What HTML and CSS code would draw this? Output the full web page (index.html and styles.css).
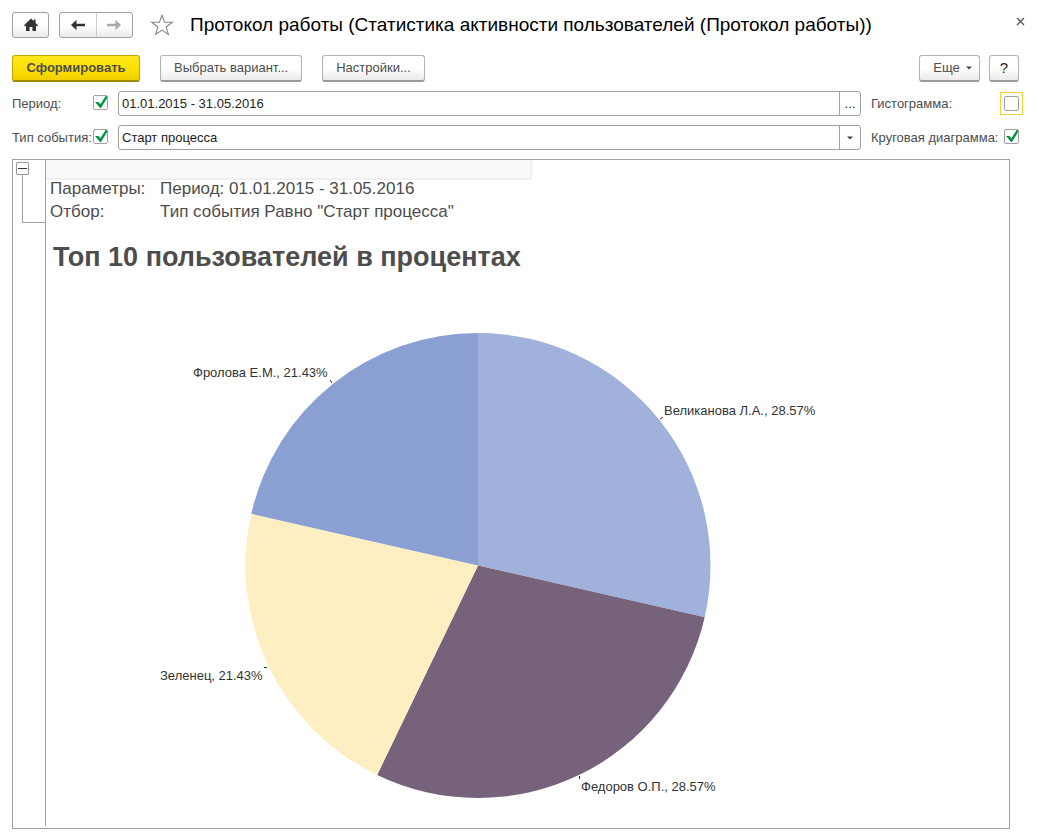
FILE: index.html
```html
<!DOCTYPE html>
<html lang="ru">
<head>
<meta charset="utf-8">
<title>Протокол работы</title>
<link rel="stylesheet" href="styles.css">
</head>
<body>
<header class="titlebar">
  <button class="btn icon-btn" type="button" aria-label="Начальная страница">
    <svg width="16" height="14" viewBox="0 0 16 14"><path d="M8 0.5L1 7.2l.9 1.3L3 7.6V13h3.6V9h2.8v4H13V7.6l1.1.9L15 7.2 12.6 4.9V1.5h-2v1.6z" fill="#333"/></svg>
  </button>
  <div class="nav-group">
    <button class="nav-btn" type="button" aria-label="Назад">
      <svg width="16" height="12" viewBox="0 0 16 12"><path d="M1 6L6.500 .7V4.800H15V7.200H6.500V11.300z" fill="#333"/></svg>
    </button>
    <button class="nav-btn" type="button" aria-label="Вперед" disabled>
      <svg width="16" height="12" viewBox="0 0 16 12"><path d="M15 6L9.500 .7V4.800H1V7.200H9.500V11.300z" fill="#aaa"/></svg>
    </button>
  </div>
  <button class="plain-btn star" type="button" aria-label="В избранное">
    <svg width="24" height="22" viewBox="0 0 24 22"><path d="M12 1.200L14.500 8.200H22.300L16.100 13L18.400 20.400L12 16.100L5.600 20.400L7.900 13L1.700 8.200H9.500Z" fill="#fff" stroke="#848484" stroke-width="1.1"/></svg>
  </button>
  <h1 class="title">Протокол работы (Статистика активности пользователей (Протокол работы))</h1>
  <button class="plain-btn close" type="button" aria-label="Закрыть">
    <svg width="9" height="9" viewBox="0 0 9 9"><path d="M1 1l7 7M8 1L1 8" stroke="#555" stroke-width="1.3"/></svg>
  </button>
</header>

<div class="toolbar">
  <button class="btn primary" type="button">Сформировать</button>
  <button class="btn" type="button">Выбрать вариант...</button>
  <button class="btn" type="button">Настройки...</button>
  <div class="toolbar-end">
    <button class="btn more" type="button">Еще
      <svg width="6" height="4" viewBox="0 0 6 4"><path d="M0 .5h6L3 3.500z" fill="#444"/></svg>
    </button>
    <button class="btn help" type="button">?</button>
  </div>
</div>

<form class="filters">
  <label for="period">Период:</label>
  <input class="check" type="checkbox" aria-label="Использовать период" checked>
  <div class="field">
    <input id="period" class="field-input" type="text" value="01.01.2015 - 31.05.2016">
    <button class="field-btn" type="button" aria-label="Выбрать период">...</button>
  </div>
  <label for="histogram">Гистограмма:</label>
  <span class="focus-frame"><input id="histogram" class="check" type="checkbox"></span>

  <label for="event">Тип события:</label>
  <input class="check" type="checkbox" aria-label="Использовать тип события" checked>
  <div class="field">
    <select id="event" class="field-input"><option>Старт процесса</option></select>
    <span class="field-arrow"><svg width="6" height="4" viewBox="0 0 6 4"><path d="M0 .5h6L3 3.500z" fill="#444"/></svg></span>
  </div>
  <label for="pie">Круговая диаграмма:</label>
  <span class="check-cell"><input id="pie" class="check" type="checkbox" checked></span>
</form>

<main class="report">
  <div class="gutter">
    <button class="collapse" type="button" aria-label="Свернуть группу"></button>
    <div class="bracket"></div>
  </div>
  <div class="sheet">
    <div class="band"></div>
    <dl class="params">
      <dt>Параметры:</dt><dd>Период: 01.01.2015 - 31.05.2016</dd>
      <dt>Отбор:</dt><dd>Тип события Равно "Старт процесса"</dd>
    </dl>
    <h2 class="chart-title">Топ 10 пользователей в процентах</h2>
    <svg class="chart" viewBox="0 0 963 540" role="img" aria-label="Круговая диаграмма">
      <path d="M432 277.500V45A232.500 232.500 0 0 1 658.700 329.200Z" fill="#a0b2db"/>
      <path d="M432 277.500L658.700 329.200A232.500 232.500 0 0 1 331.100 487Z" fill="#77627b"/>
      <path d="M432 277.500L331.100 487A232.500 232.500 0 0 1 205.300 225.800Z" fill="#fdefc1"/>
      <path d="M432 277.500L205.300 225.800A232.500 232.500 0 0 1 432 45Z" fill="#8aa0d2"/>
      <path d="M284 92l2 3M614 131l3-2M218 379.500h3M533.500 488v3" fill="none" stroke="#333"/>
      <text x="147" y="89">Фролова Е.М., 21.43%</text>
      <text x="618" y="127">Великанова Л.А., 28.57%</text>
      <text x="114" y="392">Зеленец, 21.43%</text>
      <text x="535" y="503">Федоров О.П., 28.57%</text>
    </svg>
  </div>
</main>
</body>
</html>
```
FILE: styles.css
```css
* {
  box-sizing: border-box;
}

body {
  margin: 0;
  padding: 11px 15px 11px 12px;
  background: #fff;
  color: #4d4d4d;
  font: 13px/16px "Liberation Sans", Arial, sans-serif;
}

button,
input,
select {
  font: inherit;
  color: inherit;
  margin: 0;
}

svg {
  display: block;
}

.titlebar {
  display: flex;
  align-items: center;
  height: 28px;
}

.btn {
  display: flex;
  align-items: center;
  justify-content: center;
  height: 27px;
  padding: 0 13px;
  border: 1px solid #b3b3b3;
  border-bottom: 2px solid #999;
  border-radius: 3px;
  background: linear-gradient(#fff 50%, #ebebeb);
}

.icon-btn {
  width: 37px;
  height: 26px;
  padding: 0;
  border: 1px solid #a0a0a0;
}

.nav-group {
  display: flex;
  width: 74px;
  height: 26px;
  margin-left: 10px;
  border: 1px solid #a0a0a0;
  border-radius: 3px;
  background: linear-gradient(#fff 50%, #ebebeb);
}

.nav-btn {
  display: flex;
  flex: 1;
  align-items: center;
  justify-content: center;
  padding: 0;
  border: 0;
  background: none;
}

.nav-btn + .nav-btn {
  border-left: 1px solid #ccc;
}

.plain-btn {
  padding: 0;
  border: 0;
  background: none;
}

.star {
  margin-left: 17px;
}

.title {
  flex: 1;
  margin: 0 0 0 16px;
  color: #000;
  font-size: 19px;
  font-weight: 400;
  line-height: 24px;
  white-space: nowrap;
}

.close {
  align-self: flex-start;
  margin: 6px -2px 0 0;
}

.toolbar {
  display: flex;
  gap: 20px;
  margin: 16px 4px 0 0;
}

.primary {
  min-width: 128px;
  border-color: #c0a600;
  border-bottom-color: #a08a00;
  background: linear-gradient(#ffe81f, #ffe000 50%, #efd000);
  font-weight: 700;
}

.toolbar-end {
  display: flex;
  gap: 9px;
  margin-left: auto;
}

.more {
  gap: 6px;
  width: 61px;
  padding: 0 0 0 6px;
}

.help {
  width: 30px;
  padding: 0;
  color: #222;
  font-size: 15px;
}

.filters {
  display: grid;
  grid-template-columns: 78px 18px 1fr 129px 23px;
  align-items: center;
  row-gap: 9px;
  margin-top: 9px;
  white-space: nowrap;
}

.check {
  appearance: none;
  display: block;
  width: 15px;
  height: 15px;
  margin: 0 0 2px 3px;
  border: 1px solid #a0a0a0;
  border-radius: 2px;
  background: #fff;
}

.check:checked {
  background: #fff url("data:image/svg+xml,%3Csvg xmlns='http://www.w3.org/2000/svg' viewBox='0 0 15 15'%3E%3Cpath d='M2 7H5.500L7.300 9.200L13 .5H15V1.500L8 13H7Z' fill='%23009646'/%3E%3C/svg%3E") center / 15px 15px no-repeat border-box;
}

.focus-frame {
  width: 23px;
  height: 23px;
  padding: 3px 0 0;
  border: 1px solid #f9cf32;
}

.check-cell {
  padding-left: 1px;
}

.field {
  display: flex;
  height: 25px;
  margin: 0 10px;
  border: 1px solid #a0a0a0;
  border-radius: 3px;
  color: #222;
}

.field-input {
  appearance: none;
  flex: 1;
  min-width: 0;
  padding: 0 3px;
  border: 0;
  background: none;
  outline: 0;
}

.field-btn {
  width: 21px;
  padding: 0;
  border: 0;
  border-left: 1px solid #a0a0a0;
  background: none;
}

.field-arrow {
  display: flex;
  align-items: center;
  justify-content: center;
  width: 21px;
  border-left: 1px solid #a0a0a0;
  pointer-events: none;
}

.report {
  display: flex;
  margin: 9px 13px 0 0;
  border: 1px solid #a0a0a0;
}

.gutter {
  width: 33px;
  margin-bottom: 2px;
  padding: 2px 0 0 3px;
  border-right: 1px solid #a0a0a0;
}

.collapse {
  display: flex;
  align-items: center;
  justify-content: center;
  width: 13px;
  height: 13px;
  padding: 0;
  border: 1px solid #999;
  border-radius: 1px;
  background: #fff;
}

.collapse::before {
  content: "";
  width: 9px;
  height: 1px;
  background: #333;
}

.bracket {
  height: 48px;
  margin-left: 6px;
  border: 1px solid #a0a0a0;
  border-width: 0 0 1px 1px;
}

.sheet {
  flex: 1;
  min-width: 0;
}

.band {
  width: 486px;
  max-width: 100%;
  height: 20px;
  border: solid #f0f0f0;
  border-width: 0 2px 2px 0;
  background: #f9f9f9;
}

.params {
  display: grid;
  grid-template-columns: 110px 1fr;
  row-gap: 5px;
  margin: 0 4px;
  font-size: 17px;
  line-height: 18px;
}

.params dd {
  margin: 0;
}

.chart-title {
  margin: 20px 7px 15px;
  font-size: 27px;
  line-height: 32px;
}

.chart {
  width: 100%;
  height: auto;
  fill: #333;
  font-size: 13px;
}
```
